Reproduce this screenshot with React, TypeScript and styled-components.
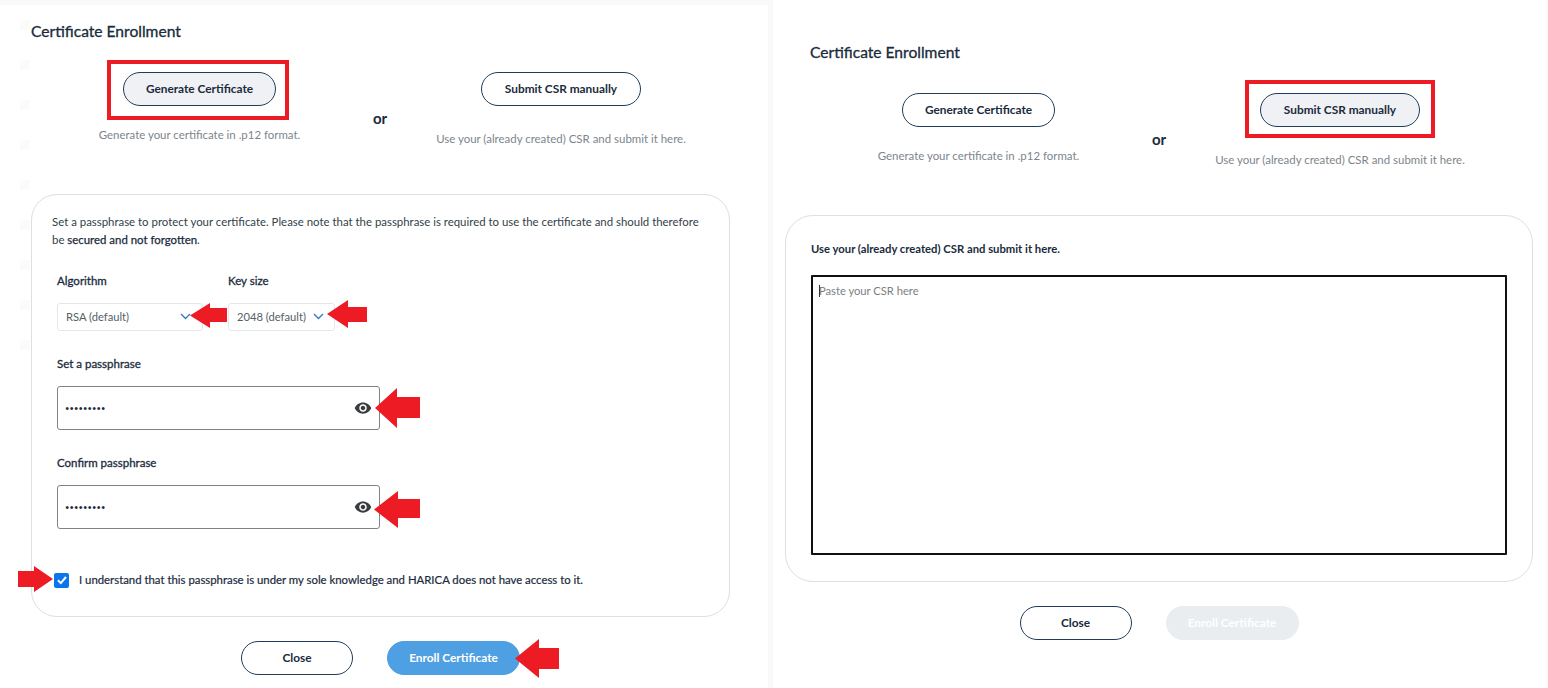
import React from "react";
import styled, { createGlobalStyle } from "styled-components";

const Global = createGlobalStyle`
  html, body { margin: 0; padding: 0; background: #f9f9fa; }
  body { font-family: Lato, "Open Sans", sans-serif; color: #1a2b3c; overflow: hidden; }
  * { box-sizing: border-box; }
`;

const Page = styled.div`
  display: flex;
  width: 1548px;
  height: 688px;
  overflow: hidden;
`;

const Panel = styled.section<{ $side: "left" | "right" }>`
  position: relative;
  display: flex;
  flex-direction: column;
  flex: none;
  background: #fff;
  width: ${(p) => (p.$side === "left" ? "768px" : "773px")};
  margin-left: ${(p) => (p.$side === "left" ? "0" : "5px")};
  margin-top: ${(p) => (p.$side === "left" ? "5px" : "0")};
  padding: ${(p) => (p.$side === "left" ? "16px 0 0 31px" : "42px 0 0 12px")};
  ${(p) =>
    p.$side === "left"
      ? `background: repeating-linear-gradient(to bottom, #fbfbfc 0 10px, transparent 10px 40px) 20px 15px / 10px 330px no-repeat, #fff;`
      : ""}
`;

const Title = styled.h2<{ $indent: number }>`
  margin: 0 0 31px ${(p) => p.$indent}px;
  font-size: 15.6px;
  line-height: 20px;
  font-weight: 400;
  -webkit-text-stroke: 0.3px #1a2b3c;
  color: #1a2b3c;
`;

const Options = styled.div<{ $indent: number }>`
  display: grid;
  grid-template-columns: 337px 1fr 338px;
  width: 699px;
  height: 122px;
  margin-left: ${(p) => p.$indent}px;
`;

const Option = styled.div`
  display: flex;
  flex-direction: column;
  align-items: center;
`;

const Or = styled.div`
  padding-top: 36px;
  text-align: center;
  font-size: 15px;
  line-height: 20px;
  font-weight: 700;
  color: #1a2b3c;
`;

const ButtonWrap = styled.div`
  position: relative;
  display: inline-flex;
`;

const Pill = styled.button<{ $w: number; $kind?: "active" | "primary" | "disabled" }>`
  width: ${(p) => p.$w}px;
  height: 34px;
  padding: 0 0 2px;
  border-radius: 17px;
  font-family: Lato, sans-serif;
  font-size: 11.85px;
  font-weight: 700;
  white-space: nowrap;
  border: 1px solid
    ${(p) =>
      p.$kind === "primary"
        ? "#4fa0e2"
        : p.$kind === "disabled"
          ? "#e9edf0"
          : "#1f3d5a"};
  background: ${(p) =>
    p.$kind === "active"
      ? "#f0f1f5"
      : p.$kind === "primary"
        ? "#4fa0e2"
        : p.$kind === "disabled"
          ? "#e9edf0"
          : "#fff"};
  color: ${(p) =>
    p.$kind === "primary" || p.$kind === "disabled" ? "#fff" : "#1a2b3c"};
`;

const Highlight = styled.span<{ $t: number; $r: number; $b: number; $l: number }>`
  position: absolute;
  top: ${(p) => p.$t}px;
  right: ${(p) => p.$r}px;
  bottom: ${(p) => p.$b}px;
  left: ${(p) => p.$l}px;
  border: 4.5px solid #ed1c24;
  pointer-events: none;
`;

const Hint = styled.p<{ $gap: number }>`
  margin: ${(p) => p.$gap}px 0 0;
  font-size: 11.45px;
  line-height: 16px;
  color: #7d858c;
  white-space: nowrap;
`;

const Card = styled.div<{ $width: number; $height: number; $radius: number }>`
  width: ${(p) => p.$width}px;
  height: ${(p) => p.$height}px;
  border: 1px solid #dcdfe3;
  border-radius: ${(p) => p.$radius}px;
  background: #fff;
`;

const LeftBody = styled.div`
  padding: 18px 0 0 20px;
`;

const Paragraph = styled.div`
  margin: 0 0 24px 0;
  font-size: 11.42px;
  line-height: 18px;
  color: #333f49;
  white-space: nowrap;
`;

const ParagraphLine = styled.div``;

const Strong = styled.span`
  color: #1a2b3c;
  -webkit-text-stroke: 0.25px #1a2b3c;
`;

const Fields = styled.div`
  padding-left: 5px;
`;

const SelectRow = styled.div`
  display: flex;
  gap: 25px;
  margin-bottom: 25px;
`;

const Label = styled.div`
  margin-bottom: 14px;
  font-size: 11.5px;
  line-height: 16px;
  font-weight: 400;
  -webkit-text-stroke: 0.3px #1a2b3c;
  color: #1a2b3c;
`;

const SelectBox = styled.div<{ $width: number; $pad: number }>`
  display: flex;
  align-items: center;
  justify-content: space-between;
  width: ${(p) => p.$width}px;
  height: 28px;
  padding: 0 ${(p) => p.$pad}px 2px 8px;
  border: 1px solid #e4e7ea;
  border-radius: 3px;
  font-size: 11.2px;
  color: #555f68;
`;

const Chevron = styled.svg`
  width: 11px;
  height: 7px;
  fill: none;
  stroke: #3b78c8;
  stroke-width: 1.4;
`;

const PassBox = styled.div`
  display: flex;
  align-items: center;
  width: 323px;
  height: 44px;
  margin-bottom: 25px;
  padding: 0 7px 0 7px;
  border: 1px solid #7e8387;
  border-radius: 3px;
`;

const PassInput = styled.input`
  flex: 1;
  min-width: 0;
  border: 0;
  outline: 0;
  padding: 0;
  background: transparent;
  font-family: Lato, sans-serif;
  font-size: 7.5px;
  letter-spacing: 0.15px;
  color: #1a2b3c;
`;

const Eye = styled.svg`
  width: 18px;
  height: 18px;
  fill: #3a3d40;
`;

const Agree = styled.label`
  display: flex;
  align-items: center;
  gap: 10px;
  margin: 43px 0 0 2px;
  font-size: 11.36px;
  line-height: 16px;
  font-weight: 400;
  -webkit-text-stroke: 0.2px #1a2b3c;
  color: #1a2b3c;
  white-space: nowrap;
`;

const Check = styled.span`
  display: inline-flex;
  align-items: center;
  justify-content: center;
  width: 15px;
  height: 15px;
  border-radius: 2px;
  background: #0b75f0;
`;

const CheckMark = styled.svg`
  width: 12px;
  height: 12px;
  fill: none;
  stroke: #fff;
  stroke-width: 2;
`;

const Footer = styled.div<{ $width: number; $gap: number }>`
  display: flex;
  justify-content: center;
  gap: 34px;
  width: ${(p) => p.$width}px;
  margin-top: ${(p) => p.$gap}px;
`;

const RightBody = styled.div`
  padding: 24px 25px 0 25px;
`;

const CsrLead = styled.div`
  margin-bottom: 17px;
  font-size: 11.27px;
  line-height: 18px;
  font-weight: 700;
  color: #1a2b3c;
`;

const CsrWrap = styled.div`
  position: relative;
  width: 696px;
  height: 280px;
  &::after {
    content: "";
    position: absolute;
    left: 8px;
    top: 10px;
    width: 1px;
    height: 12px;
    background: #333;
  }
`;

const CsrArea = styled.textarea`
  display: block;
  width: 100%;
  height: 100%;
  padding: 6px 6px;
  border: 2px solid #111;
  border-radius: 1px;
  outline: 0;
  resize: none;
  font-family: Lato, sans-serif;
  font-size: 11.2px;
  line-height: 16px;
  &::placeholder {
    color: #7b7f84;
    opacity: 1;
  }
`;

const ArrowSvg = styled.svg<{ $x: number; $y: number }>`
  position: absolute;
  left: ${(p) => p.$x}px;
  top: ${(p) => p.$y}px;
  fill: #ed1c24;
  pointer-events: none;
`;

/* x, y are page coordinates of the arrow's box; panel offset is applied here */
const Arrow = ({
  x,
  y,
  w,
  h,
  head,
  shaftTop,
  shaftBottom,
  flip,
}: {
  x: number;
  y: number;
  w: number;
  h: number;
  head: number;
  shaftTop: number;
  shaftBottom: number;
  flip?: boolean;
}) => {
  const pts: [number, number][] = [
    [0, h / 2],
    [head, 0],
    [head, shaftTop],
    [w, shaftTop],
    [w, shaftBottom],
    [head, shaftBottom],
    [head, h],
  ];
  const points = pts.map(([a, b]) => `${flip ? w - a : a},${b}`).join(" ");
  return (
    <ArrowSvg $x={x} $y={y - 5} width={w} height={h} viewBox={`0 0 ${w} ${h}`}>
      <polygon points={points} />
    </ArrowSvg>
  );
};

const ChevronIcon = () => (
  <Chevron viewBox="0 0 11 7">
    <path d="M1 1l4.5 4.5L10 1" />
  </Chevron>
);

const EyeIcon = () => (
  <Eye viewBox="0 0 24 24">
    <path d="M12 4.5C7 4.5 2.73 7.61 1 12c1.73 4.39 6 7.5 11 7.5s9.27-3.11 11-7.5c-1.73-4.39-6-7.5-11-7.5zM12 17c-2.76 0-5-2.24-5-5s2.24-5 5-5 5 2.24 5 5-2.24 5-5 5zm0-8c-1.66 0-3 1.34-3 3s1.34 3 3 3 3-1.34 3-3-1.34-3-3-3z" />
  </Eye>
);

const Password = () => (
  <PassBox>
    <PassInput type="password" value="123456789" readOnly />
    <EyeIcon />
  </PassBox>
);

const genHint = "Generate your certificate in .p12 format.";
const csrHint = "Use your (already created) CSR and submit it here.";

export default function App() {
  return (
    <Page>
      <Global />
      <Panel $side="left">
        <Title $indent={0}>Certificate Enrollment</Title>
        <Options $indent={0}>
          <Option>
            <ButtonWrap>
              <Pill $w={153} $kind="active">Generate Certificate</Pill>
              <Highlight $t={-12} $b={-14} $l={-16} $r={-13} />
            </ButtonWrap>
            <Hint $gap={21}>{genHint}</Hint>
          </Option>
          <Or>or</Or>
          <Option>
            <ButtonWrap>
              <Pill $w={160}>Submit CSR manually</Pill>
            </ButtonWrap>
            <Hint $gap={25}>{csrHint}</Hint>
          </Option>
        </Options>
        <Card $width={699} $height={423} $radius={26}>
          <LeftBody>
            <Paragraph>
              <ParagraphLine>
                Set a passphrase to protect your certificate. Please note that the passphrase is
                required to use the certificate and should therefore
              </ParagraphLine>
              <ParagraphLine>
                be <Strong>secured and not forgotten</Strong>.
              </ParagraphLine>
            </Paragraph>
            <Fields>
              <SelectRow>
                <div>
                  <Label>Algorithm</Label>
                  <SelectBox $width={146} $pad={11}>
                    RSA (default)
                    <ChevronIcon />
                  </SelectBox>
                </div>
                <div>
                  <Label>Key size</Label>
                  <SelectBox $width={107} $pad={10}>
                    2048 (default)
                    <ChevronIcon />
                  </SelectBox>
                </div>
              </SelectRow>
              <Label>Set a passphrase</Label>
              <Password />
              <Label>Confirm passphrase</Label>
              <Password />
            </Fields>
            <Agree>
              <Check>
                <CheckMark viewBox="0 0 12 12">
                  <path d="M2 6.3l2.8 2.8L10 3" />
                </CheckMark>
              </Check>
              I understand that this passphrase is under my sole knowledge and HARICA does not have
              access to it.
            </Agree>
          </LeftBody>
        </Card>
        <Footer $width={699} $gap={24}>
          <Pill $w={112}>Close</Pill>
          <Pill $w={133} $kind="primary">Enroll Certificate</Pill>
        </Footer>
        <Arrow x={190} y={303} w={37} h={25} head={20} shaftTop={5} shaftBottom={19} />
        <Arrow x={327} y={300} w={40} h={28} head={21} shaftTop={7} shaftBottom={22} />
        <Arrow x={375} y={388} w={45} h={40} head={22} shaftTop={9} shaftBottom={30} />
        <Arrow x={374} y={491} w={46} h={37} head={24} shaftTop={8} shaftBottom={27} />
        <Arrow x={18} y={566} w={35} h={26} head={19} shaftTop={5} shaftBottom={21} flip />
        <Arrow x={515} y={639} w={44} h={39} head={24} shaftTop={9} shaftBottom={30} />
      </Panel>
      <Panel $side="right">
        <Title $indent={25}>Certificate Enrollment</Title>
        <Options $indent={25}>
          <Option>
            <ButtonWrap>
              <Pill $w={153}>Generate Certificate</Pill>
            </ButtonWrap>
            <Hint $gap={21}>{genHint}</Hint>
          </Option>
          <Or>or</Or>
          <Option>
            <ButtonWrap>
              <Pill $w={160} $kind="active">Submit CSR manually</Pill>
              <Highlight $t={-13} $b={-11} $l={-15} $r={-15} />
            </ButtonWrap>
            <Hint $gap={25}>{csrHint}</Hint>
          </Option>
        </Options>
        <Card $width={748} $height={367} $radius={28}>
          <RightBody>
            <CsrLead>{csrHint}</CsrLead>
            <CsrWrap>
              <CsrArea placeholder="Paste your CSR here" readOnly />
            </CsrWrap>
          </RightBody>
        </Card>
        <Footer $width={748} $gap={24}>
          <Pill $w={112}>Close</Pill>
          <Pill $w={133} $kind="disabled">Enroll Certificate</Pill>
        </Footer>
      </Panel>
    </Page>
  );
}
